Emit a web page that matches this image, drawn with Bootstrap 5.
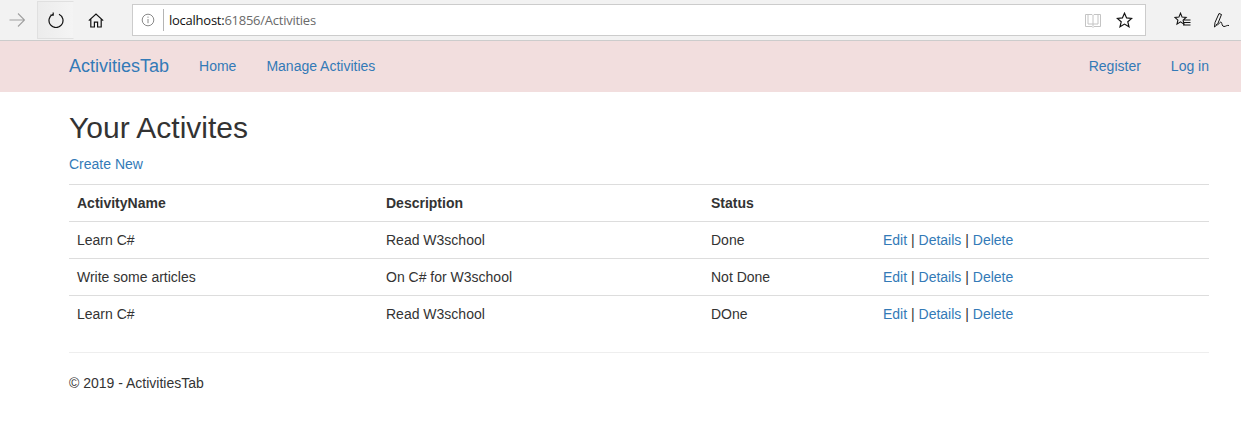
<!DOCTYPE html>
<html lang="en">
<head>
    <meta charset="UTF-8">
    <meta name="viewport" content="width=device-width, initial-scale=1.0">
    <title>Activities</title>
    <link rel="stylesheet" href="https://cdn.jsdelivr.net/npm/bootstrap@5.3.0/dist/css/bootstrap.min.css">
    <style>
        html, body { overflow: hidden; }
        body { font-family: "Liberation Sans", Arial, sans-serif; font-size: 14px; line-height: 20px; color: #333; }
        a { color: #337ab7; text-decoration: none; }

        /* browser toolbar */
        .chrome-bar { height: 41px; background: #f2f2f2; border-bottom: 1px solid #ccc; }
        .chrome-btn { width: 38px; height: 38px; }
        .chrome-btn-active { width: 37px; border: 1px solid #e0e0e0; border-right-color: #f2f2f2; background: linear-gradient(90deg, #ececec, #f4f4f4); }
        .chrome-back { width: 37px; padding-right: 4px; }
        .chrome-home { width: 44px; }
        .addr-box { width: 1014px; height: 32px; margin-left: 14px; background: #fff; border: 1px solid #ccc; }
        .addr-info { width: 30px; }
        .addr-sep { width: 1px; height: 22px; background: #b5b5b5; }
        .addr-text { font-family: "Open Sans", sans-serif; font-size: 13px; padding-left: 5px; color: #6a6a6a; letter-spacing: -.25px; }
        .addr-host { color: #111; }
        .addr-tools { margin-left: auto; gap: 15px; padding-right: 12px; }
        .chrome-end { gap: 22px; padding-left: 28px; }

        /* site navbar */
        .site-nav { height: 51px; padding-bottom: 1px; background: #f2dede; }
        .page-wrap { width: 1140px; margin-left: 69px; }
        .site-brand { font-size: 18px; }
        .site-links { gap: 30px; margin-left: 30px; }
        .site-right { margin-left: auto; gap: 30px; }

        h2.page-title { font-size: 30px; line-height: 33px; font-weight: 500; margin: 19px 0 10px; color: #333; }
        .create-link { margin: 0 0 10px; }

        .activity-table { margin-bottom: 20px; color: #333; table-layout: fixed; width: 1140px; }
        .activity-table th, .activity-table td { padding: 8px; line-height: 20px; border-top: 1px solid #ddd; border-bottom: 0; box-shadow: none; }
        .activity-table th { font-weight: 700; }
        .col-name { width: 309px; }
        .col-desc { width: 325px; }
        .col-status { width: 172px; }

        .foot-rule { margin: 0 0 20px; border: 0; border-top: 1px solid #eee; opacity: 1; }
        .foot-text { margin: 0; }
    </style>
</head>
<body>
    <!-- Browser toolbar -->
    <div class="chrome-bar d-flex align-items-center">
        <div class="chrome-btn chrome-back d-flex align-items-center justify-content-center">
            <svg width="16" height="14" viewBox="0 0 16 14" fill="none" stroke="#a0a0a0" stroke-width="1.1"><path d="M.5 7h15M9 .5 15.500 7 9 13.500"/></svg>
        </div>
        <div class="chrome-btn chrome-btn-active d-flex align-items-center justify-content-center">
            <svg width="16" height="16" viewBox="0 0 16 16" fill="none" stroke="#111" stroke-width="1.2"><path d="M5 2.200A7 7 0 1 0 11 2.200M5.200 .5v2.600H2.400"/></svg>
        </div>
        <div class="chrome-btn chrome-home d-flex align-items-center justify-content-center">
            <svg width="16" height="15" viewBox="0 0 16 15" fill="none" stroke="#111" stroke-width="1.2"><path d="M.8 7.600 8 1l7.200 6.600M2.800 6v8h3.600V9.200h3.200V14h3.600V6"/></svg>
        </div>
        <div class="addr-box d-flex align-items-center">
            <div class="addr-info d-flex justify-content-center">
                <svg width="14" height="14" viewBox="0 0 14 14" fill="none" stroke="#8a8a8a"><circle cx="7" cy="7" r="5.800"/><path d="M7 6v4.200M7 3.600v1.200"/></svg>
            </div>
            <div class="addr-sep"></div>
            <div class="addr-text"><span class="addr-host">localhost:</span>61856/Activities</div>
            <div class="addr-tools d-flex align-items-center">
                <svg width="16" height="15" viewBox="0 0 16 15" fill="none" stroke="#c4c4c4"><path d="M.5 1.500h6.500l1 1 1-1h6.500v12H9l-1 1-1-1H.5zM8 2.500v11M3 1.500v9.500h5M13 1.500v9.500H8"/></svg>
                <svg width="17" height="16" viewBox="0 0 17 16" fill="none" stroke="#111" stroke-width="1.2"><path d="M8.500 1.200l2.100 4.700 5.100.5-3.900 3.400 1.200 5-4.500-2.700L4 14.800l1.200-5L1.300 6.400l5.100-.5z"/></svg>
            </div>
        </div>
        <div class="chrome-end d-flex align-items-center">
            <svg width="17" height="16" viewBox="0 0 17 16" fill="none" stroke="#111" stroke-width="1.1"><path d="M6.500 1.200l1.600 3.900 4 .3-3 2.700.9 4-3.500-2.200L3 12.100l.9-4-3-2.700 4-.3zM10 8h6.500M10 10.500h6.500M9 13h7.500"/></svg>
            <svg width="17" height="17" viewBox="0 0 17 17" fill="none" stroke="#111" stroke-width="1"><path d="M1.500 15l.5-4.500 4-9 2.500 1-3.800 9.500zM3 12.500l1.500.5M5.500 12.500c1.500-2.500 2.500-3 3-2s.5 4 2.500 4 2.500-1.500 5-1"/></svg>
        </div>
    </div>

    <!-- Site navbar -->
    <nav class="site-nav d-flex align-items-center">
        <div class="page-wrap d-flex align-items-center">
            <a class="site-brand" href="#">ActivitiesTab</a>
            <div class="site-links d-flex">
                <a href="#">Home</a>
                <a href="#">Manage Activities</a>
            </div>
            <div class="site-right d-flex">
                <a href="#">Register</a>
                <a href="#">Log in</a>
            </div>
        </div>
    </nav>

    <div class="page-wrap">
        <h2 class="page-title">Your Activites</h2>
        <p class="create-link"><a href="#">Create New</a></p>

        <table class="table activity-table">
            <thead>
                <tr>
                    <th class="col-name">ActivityName</th>
                    <th class="col-desc">Description</th>
                    <th class="col-status">Status</th>
                    <th></th>
                </tr>
            </thead>
            <tbody>
                <tr>
                    <td>Learn C#</td>
                    <td>Read W3school</td>
                    <td>Done</td>
                    <td><a href="#">Edit</a> | <a href="#">Details</a> | <a href="#">Delete</a></td>
                </tr>
                <tr>
                    <td>Write some articles</td>
                    <td>On C# for W3school</td>
                    <td>Not Done</td>
                    <td><a href="#">Edit</a> | <a href="#">Details</a> | <a href="#">Delete</a></td>
                </tr>
                <tr>
                    <td>Learn C#</td>
                    <td>Read W3school</td>
                    <td>DOne</td>
                    <td><a href="#">Edit</a> | <a href="#">Details</a> | <a href="#">Delete</a></td>
                </tr>
            </tbody>
        </table>

        <hr class="foot-rule">
        <footer>
            <p class="foot-text">© 2019 - ActivitiesTab</p>
        </footer>
    </div>

    <script src="https://cdn.jsdelivr.net/npm/bootstrap@5.3.0/dist/js/bootstrap.bundle.min.js"></script>
</body>
</html>
